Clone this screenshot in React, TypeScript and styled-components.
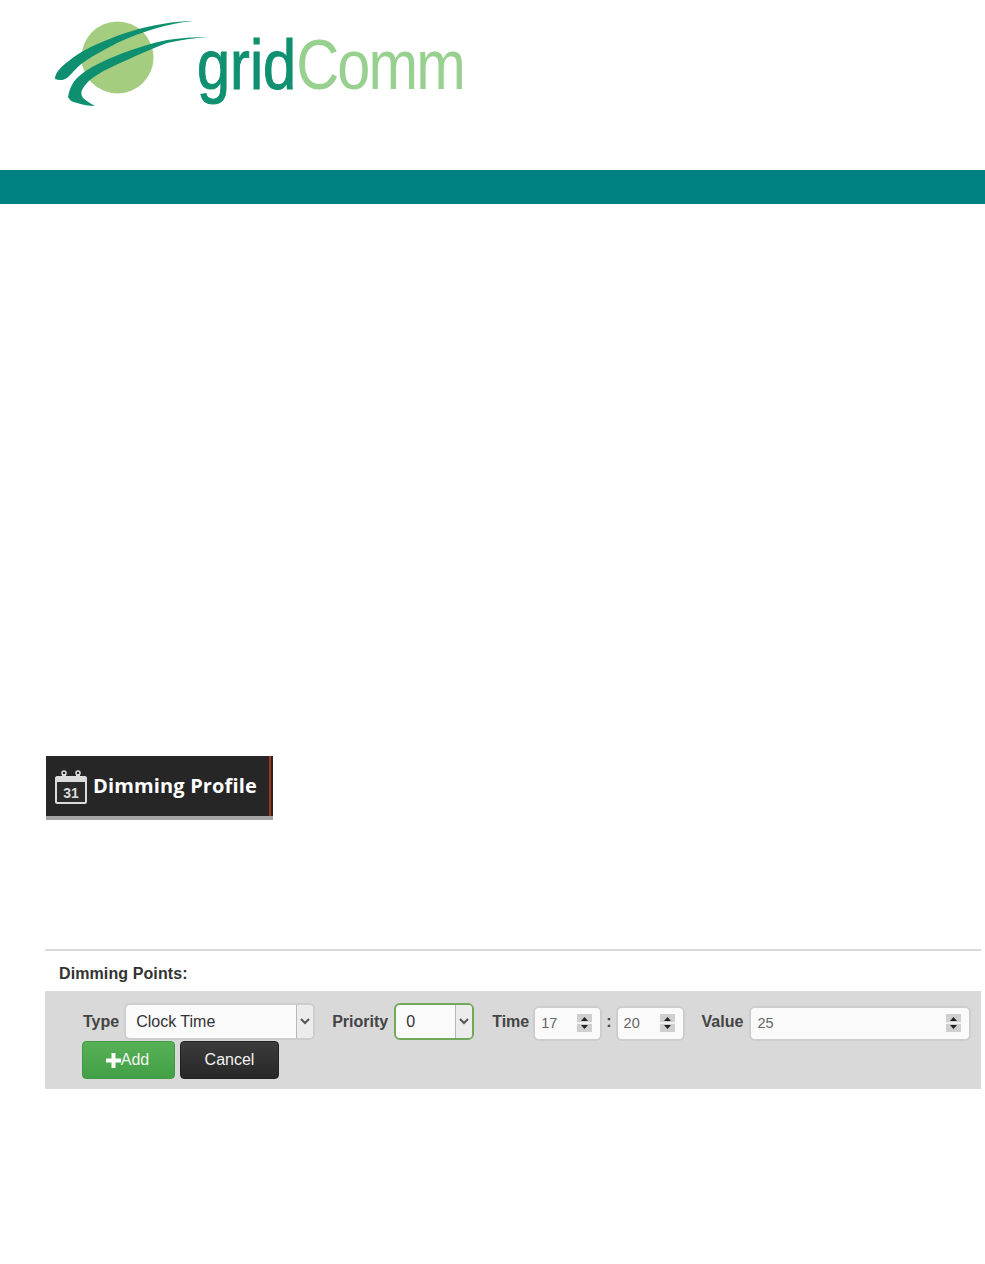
import React from "react";
import styled, { createGlobalStyle } from "styled-components";

const GlobalStyle = createGlobalStyle`
  html, body {
    margin: 0;
    padding: 0;
    background: #fff;
    font-family: "Liberation Sans", Arial, sans-serif;
  }
`;
const Page = styled.div`
  width: 985px;
  height: 1264px;
  overflow: hidden;
`;
const Header = styled.header`
  display: flex;
  align-items: flex-start;
  height: 170px;
  padding-left: 50px;
  box-sizing: border-box;
`;
const LogoMark = styled.svg`
  flex: none;
  margin-top: 15px;
  width: 165px;
  height: 95px;
  filter: blur(0.5px);
`;
const LogoWords = styled.div`
  flex: none;
  margin: 25px 0 0 -18px;
  font-size: 70px;
  line-height: 80px;
  white-space: nowrap;
  transform: scaleX(0.85);
  transform-origin: left top;
  filter: blur(0.5px);
`;
const Grid = styled.span`
  color: #0f9070;
  -webkit-text-stroke: 1px #0f9070;
`;
const Comm = styled.span`
  color: #97d08f;
  letter-spacing: -2.2px;
`;
const TealBar = styled.div`
  height: 34px;
  background: #008080;
`;
const ProfileTab = styled.div`
  display: flex;
  align-items: center;
  gap: 6px;
  box-sizing: border-box;
  width: 227px;
  height: 64px;
  margin: 552px 0 0 46px;
  padding: 2px 0 0 9px;
  background: #262626;
  border-bottom: 4px solid #a3a3a3;
  position: relative;
`;
const TabEdge = styled.span`
  position: absolute;
  top: 0;
  right: 2px;
  bottom: 0;
  width: 2px;
  background: #a5341f;
`;
const TabTitle = styled.span`
  font-family: "Open Sans", sans-serif;
  font-size: 20px;
  letter-spacing: 0.15px;
  font-weight: 700;
  color: #fff;
  white-space: nowrap;
  margin-top: -4px;
`;
const Section = styled.section`
  width: 936px;
  margin: 129px 0 0 45px;
  border-top: 2px solid #d9d9d9;
`;
const SectionTitle = styled.div`
  height: 40px;
  padding: 14px 0 0 14px;
  box-sizing: border-box;
  font-size: 16px;
  line-height: 17px;
  letter-spacing: 0.1px;
  font-weight: 700;
  color: #333;
`;
const Panel = styled.div`
  height: 98px;
  box-sizing: border-box;
  padding: 11px 0 0 38px;
  background: #d9d9d9;
`;
const Row = styled.div`
  display: flex;
  align-items: center;
  height: 39px;
`;
const Label = styled.label<{ $left: number; $gap: number }>`
  margin: 0 ${(p) => p.$gap}px 0 ${(p) => p.$left}px;
  font-size: 16px;
  font-weight: 700;
  color: #444;
  white-space: nowrap;
`;
const Colon = styled.span`
  margin: 0 4px;
  font-size: 16px;
  font-weight: 700;
  color: #444;
`;
const Select = styled.div<{ $width: number; $active?: boolean }>`
  display: flex;
  box-sizing: border-box;
  width: ${(p) => p.$width}px;
  height: 37px;
  border: 2px solid ${(p) => (p.$active ? "#72a85a" : "#cdcdcd")};
  border-radius: 6px;
  background: #fafafa;
  overflow: hidden;
`;
const SelectText = styled.span`
  flex: 1;
  padding-left: 10px;
  font-size: 16px;
  line-height: 33px;
  color: #333;
`;
const SelectArrow = styled.span`
  flex: none;
  display: flex;
  align-items: center;
  justify-content: center;
  width: 16px;
  border-left: 1px solid #b8b8b8;
  background: #ececec;
`;
const NumberBox = styled.div<{ $width: number }>`
  display: flex;
  align-items: center;
  justify-content: space-between;
  box-sizing: border-box;
  width: ${(p) => p.$width}px;
  height: 35px;
  margin-top: 4px;
  padding: 0 8px 2px 6px;
  border: 2px solid #cdcdcd;
  border-radius: 6px;
  background: #fafafa;
  font-size: 14.5px;
  color: #666;
`;
const ButtonRow = styled.div`
  display: flex;
  gap: 5px;
  margin-left: -1px;
`;
const Button = styled.button<{ $variant: "add" | "cancel" }>`
  display: flex;
  align-items: center;
  justify-content: center;
  box-sizing: border-box;
  width: ${(p) => (p.$variant === "add" ? 93 : 99)}px;
  height: 38px;
  padding: 0 ${(p) => (p.$variant === "add" ? 2 : 0)}px 0 0;
  border: 1px solid ${(p) => (p.$variant === "add" ? "#439a46" : "#222")};
  border-radius: 4px;
  background: ${(p) =>
    p.$variant === "add"
      ? "linear-gradient(#56b056, #44a047)"
      : "linear-gradient(#3c3c3c, #272727)"};
  color: #f2f2f2;
  font-family: "Liberation Sans", Arial, sans-serif;
  font-size: 16px;
`;

const Swoosh = () => (
  <LogoMark viewBox="50 15 165 95">
    <circle cx="117.5" cy="57.5" r="36" fill="#a4cd80" />
    <path
      d="M193 21C165 21 130 30 107 40C90 47 78 53 70 60C62 66 55 72 55 79C60 81 64 80 67 78C72 74 75 69 80 65C90 57 104 50 117 43C130 37 143 32 157 28C168 25 181 22 193 21Z"
      fill="#0e8f70"
    />
    <path
      d="M208 37C195 37 180 38 167 40C152 43 137 48 123 53C108 59 94 65 83 73C75 79 70 85 68 97C70 101 73 102 77 103C83 105 89 106 95 106C90 103 86 101 83 98C81 95 81 92 82 90C85 84 90 79 97 75C106 69 116 65 127 60C140 54 153 48 167 43C180 40 194 38 208 37Z"
      fill="#0e8f70"
    />
  </LogoMark>
);

const CalendarIcon = () => (
  <svg width="32" height="34" viewBox="0 0 32 34">
    <path
      d="M2 6H7V4H11V6H21V4H25V6H30C31 6 32 7 32 8V32C32 33 31 34 30 34H2C1 34 0 33 0 32V8C0 7 1 6 2 6Z"
      fill="#dcdcdc"
    />
    <rect x="2" y="12" width="28" height="20" fill="#2b2b2b" />
    <circle cx="9" cy="3" r="2" fill="none" stroke="#dcdcdc" strokeWidth="1.5" />
    <circle cx="23" cy="3" r="2" fill="none" stroke="#dcdcdc" strokeWidth="1.5" />
    <text
      x="16"
      y="28"
      textAnchor="middle"
      fontFamily="'Liberation Sans', sans-serif"
      fontWeight="700"
      fontSize="14"
      fill="#dcdcdc"
    >
      31
    </text>
  </svg>
);

const Chevron = () => (
  <svg width="10" height="7" viewBox="0 0 10 7">
    <path d="M1 1L5 5L9 1" fill="none" stroke="#555" strokeWidth="2" />
  </svg>
);

const Spinner = () => (
  <svg width="15" height="18" viewBox="0 0 15 18">
    <rect width="15" height="18" fill="#cfcfcf" />
    <rect y="8" width="15" height="2" fill="#efefef" />
    <path d="M7.5 3L11 7H4Z" fill="#222" />
    <path d="M7.5 15L4 11H11Z" fill="#222" />
  </svg>
);

const App = () => {
  return (
    <Page>
      <GlobalStyle />
      <Header>
        <Swoosh />
        <LogoWords>
          <Grid>grid</Grid>
          <Comm>Comm</Comm>
        </LogoWords>
      </Header>
      <TealBar />
      <ProfileTab>
        <CalendarIcon />
        <TabTitle>Dimming Profile</TabTitle>
        <TabEdge />
      </ProfileTab>
      <Section>
        <SectionTitle>Dimming Points:</SectionTitle>
        <Panel>
          <Row>
            <Label $left={0} $gap={5}>Type</Label>
            <Select $width={191}>
              <SelectText>Clock Time</SelectText>
              <SelectArrow>
                <Chevron />
              </SelectArrow>
            </Select>
            <Label $left={17} $gap={6}>Priority</Label>
            <Select $width={80} $active>
              <SelectText>0</SelectText>
              <SelectArrow>
                <Chevron />
              </SelectArrow>
            </Select>
            <Label $left={18} $gap={4}>Time</Label>
            <NumberBox $width={69}>
              17
              <Spinner />
            </NumberBox>
            <Colon>:</Colon>
            <NumberBox $width={69}>
              20
              <Spinner />
            </NumberBox>
            <Label $left={17} $gap={6}>Value</Label>
            <NumberBox $width={222}>
              25
              <Spinner />
            </NumberBox>
          </Row>
          <ButtonRow>
            <Button $variant="add">
              <svg width="15" height="15" viewBox="0 0 15 15">
                <path d="M5.5 0H9.5V5.5H15V9.5H9.5V15H5.5V9.5H0V5.5H5.5Z" fill="#fff" />
              </svg>
              Add
            </Button>
            <Button $variant="cancel">Cancel</Button>
          </ButtonRow>
        </Panel>
      </Section>
    </Page>
  );
};

export default App;
